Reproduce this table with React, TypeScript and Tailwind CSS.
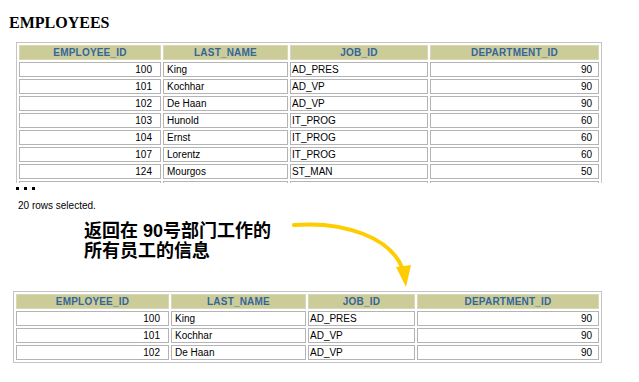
import React from "react";

type Row = [string, string, string, string];

const topRows: Row[] = [
  ["100", "King", "AD_PRES", "90"],
  ["101", "Kochhar", "AD_VP", "90"],
  ["102", "De Haan", "AD_VP", "90"],
  ["103", "Hunold", "IT_PROG", "60"],
  ["104", "Ernst", "IT_PROG", "60"],
  ["107", "Lorentz", "IT_PROG", "60"],
  ["124", "Mourgos", "ST_MAN", "50"],
  ["", "", "", ""],
];

const bottomRows: Row[] = [
  ["100", "King", "AD_PRES", "90"],
  ["101", "Kochhar", "AD_VP", "90"],
  ["102", "De Haan", "AD_VP", "90"],
];

const headers = ["EMPLOYEE_ID", "LAST_NAME", "JOB_ID", "DEPARTMENT_ID"];

function DataTable({ rows, cols }: { rows: Row[]; cols: string }) {
  return (
    <div className="border border-[#c4c4c4] p-[2px] w-fit bg-white">
      <div className={`grid ${cols} gap-[2px]`}>
        {headers.map((h) => (
          <div
            key={h}
            className="h-[15px] bg-[#cccc99] border border-[#d8d8b8] flex items-center justify-center text-[10px] leading-[13px] font-bold text-[#336699] tracking-[0.2px]"
          >
            {h}
          </div>
        ))}
        {rows.map((r, i) => (
          <React.Fragment key={i}>
            <div className="h-[15px] border border-[#b4b4b4] flex items-center justify-end pr-[8px] text-[10px] leading-[13px] text-black">
              {r[0]}
            </div>
            <div className="h-[15px] border border-[#b4b4b4] flex items-center pl-[3px] text-[10px] leading-[13px] text-black">
              {r[1]}
            </div>
            <div className="h-[15px] border border-[#b4b4b4] flex items-center pl-[1px] text-[10px] leading-[13px] text-black">
              {r[2]}
            </div>
            <div className="h-[15px] border border-[#b4b4b4] flex items-center justify-end pr-[6px] text-[10px] leading-[13px] text-black">
              {r[3]}
            </div>
          </React.Fragment>
        ))}
      </div>
    </div>
  );
}

export default function App() {
  return (
    <div className="relative w-[639px] h-[382px] bg-white overflow-hidden font-['Liberation_Sans',Arial,sans-serif]">
      <div className="flex flex-col">
        <div className="pt-[13px] pl-[9px] h-[33px] leading-[20px] text-[16px] font-bold text-black font-['Liberation_Serif','Times_New_Roman',serif]">
          EMPLOYEES
        </div>
        <div className="mt-[9px] ml-[16px] h-[141px] overflow-hidden">
          <DataTable rows={topRows} cols="grid-cols-[142px_125px_138px_169px]" />
        </div>
        <div className="mt-[4px] ml-[16px] flex gap-[5px] h-[3px]">
          <div className="w-[3px] h-[3px] bg-black" />
          <div className="w-[3px] h-[3px] bg-black" />
          <div className="w-[3px] h-[3px] bg-black" />
        </div>
        <div className="mt-[10px] ml-[18px] text-[10px] leading-[12px] text-black">
          20 rows selected.
        </div>
        <div className="mt-[9px] ml-[84px] text-[18px] leading-[20px] font-semibold text-black font-['Liberation_Sans','Noto_Sans_CJK_SC',sans-serif]">
          <div className="h-[20px]">
            返回在 <span className="font-bold">90</span>号部门工作的
          </div>
          <div className="h-[20px]">所有员工的信息</div>
        </div>
        <div className="mt-[30px] ml-[13px]">
          <DataTable rows={bottomRows} cols="grid-cols-[153px_135px_107px_182px]" />
        </div>
      </div>
      <svg
        className="absolute left-0 top-0 pointer-events-none"
        width="639"
        height="382"
        viewBox="0 0 639 382"
      >
        <path
          d="M294 225 C 345 221, 392 238, 403 270"
          fill="none"
          stroke="#ffcc00"
          strokeWidth="4"
          strokeLinecap="round"
        />
        <polygon points="396,267 411,265 406,287" fill="#ffcc00" />
      </svg>
    </div>
  );
}
